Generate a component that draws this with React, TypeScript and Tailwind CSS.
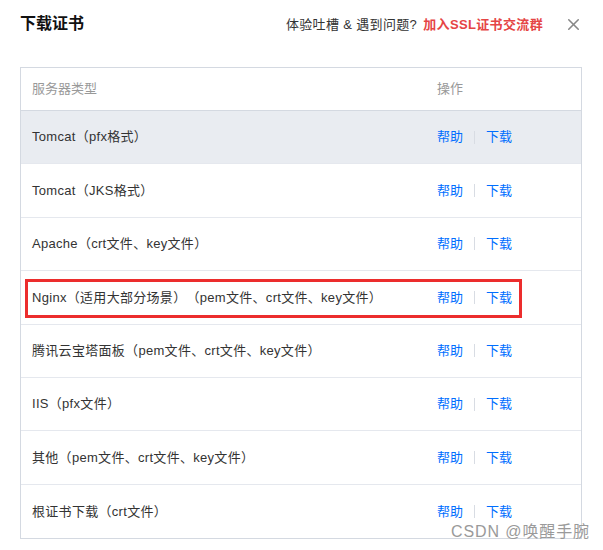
import { X } from 'lucide-react';

const rows = [
  'Tomcat（pfx格式）',
  'Tomcat（JKS格式）',
  'Apache（crt文件、key文件）',
  'Nginx（适用大部分场景）（pem文件、crt文件、key文件）',
  '腾讯云宝塔面板（pem文件、crt文件、key文件）',
  'IIS（pfx文件）',
  '其他（pem文件、crt文件、key文件）',
  '根证书下载（crt文件）',
];

export default function App() {
  return (
    <main
      className="relative w-[603px] h-[550px] bg-white overflow-hidden text-[#333] [text-spacing-trim:space-all]"
      style={{ fontFamily: '"Liberation Sans", "Noto Sans CJK SC", sans-serif' }}
    >
      {/* Header */}
      <div className="flex items-center h-[48px] pl-5 pr-[20px]">
        <h1 className="text-[16px] font-bold text-[#111] leading-none">下载证书</h1>
        <div className="ml-auto flex items-center text-[13px] leading-none tracking-[0.35px]">
          <span className="text-[#333]">体验吐槽 &amp; 遇到问题?</span>
          <a className="ml-[6px] font-bold text-[#e54545]">加入SSL证书交流群</a>
        </div>
        <button className="ml-[21px] text-[#888]">
          <X className="w-[19px] h-[19px]" strokeWidth={2} />
        </button>
      </div>

      {/* Table */}
      <div className="mt-[19px] mx-5 w-[562px] border border-[#d4d9e1] text-[13px]">
        <div className="flex items-center h-[43px] border-b border-[#d4d9e1] text-[#999]">
          <div className="flex-1 pl-[11px]">服务器类型</div>
          <div className="w-[144px]">操作</div>
        </div>
        {rows.map((r, i) => (
          <div
            key={r}
            className={`flex items-center h-[53.4px] ${i < rows.length - 1 ? 'border-b border-[#e5e8ee]' : ''} ${
              i === 0 ? 'bg-[#e9ecf1]' : 'bg-white'
            }`}
          >
            <div className="flex-1 pl-[11px] text-[#333] tracking-[0.3px]">{r}</div>
            <div className="w-[144px] flex items-center text-[#006eff]">
              <a>帮助</a>
              <span className="mx-[11px] w-px h-[13px] bg-[#d8dce3]"></span>
              <a>下载</a>
            </div>
          </div>
        ))}
      </div>

      {/* red annotation box */}
      <div className="absolute left-[25px] top-[279px] w-[497px] h-[39px] border-[3px] border-[#ec2d2d]"></div>

      {/* watermark */}
      <div className="absolute left-[451px] top-[520px] text-[16px] text-[#9a9a9a] tracking-[0.9px]">
        CSDN @唤醒手腕
      </div>
    </main>
  );
}
